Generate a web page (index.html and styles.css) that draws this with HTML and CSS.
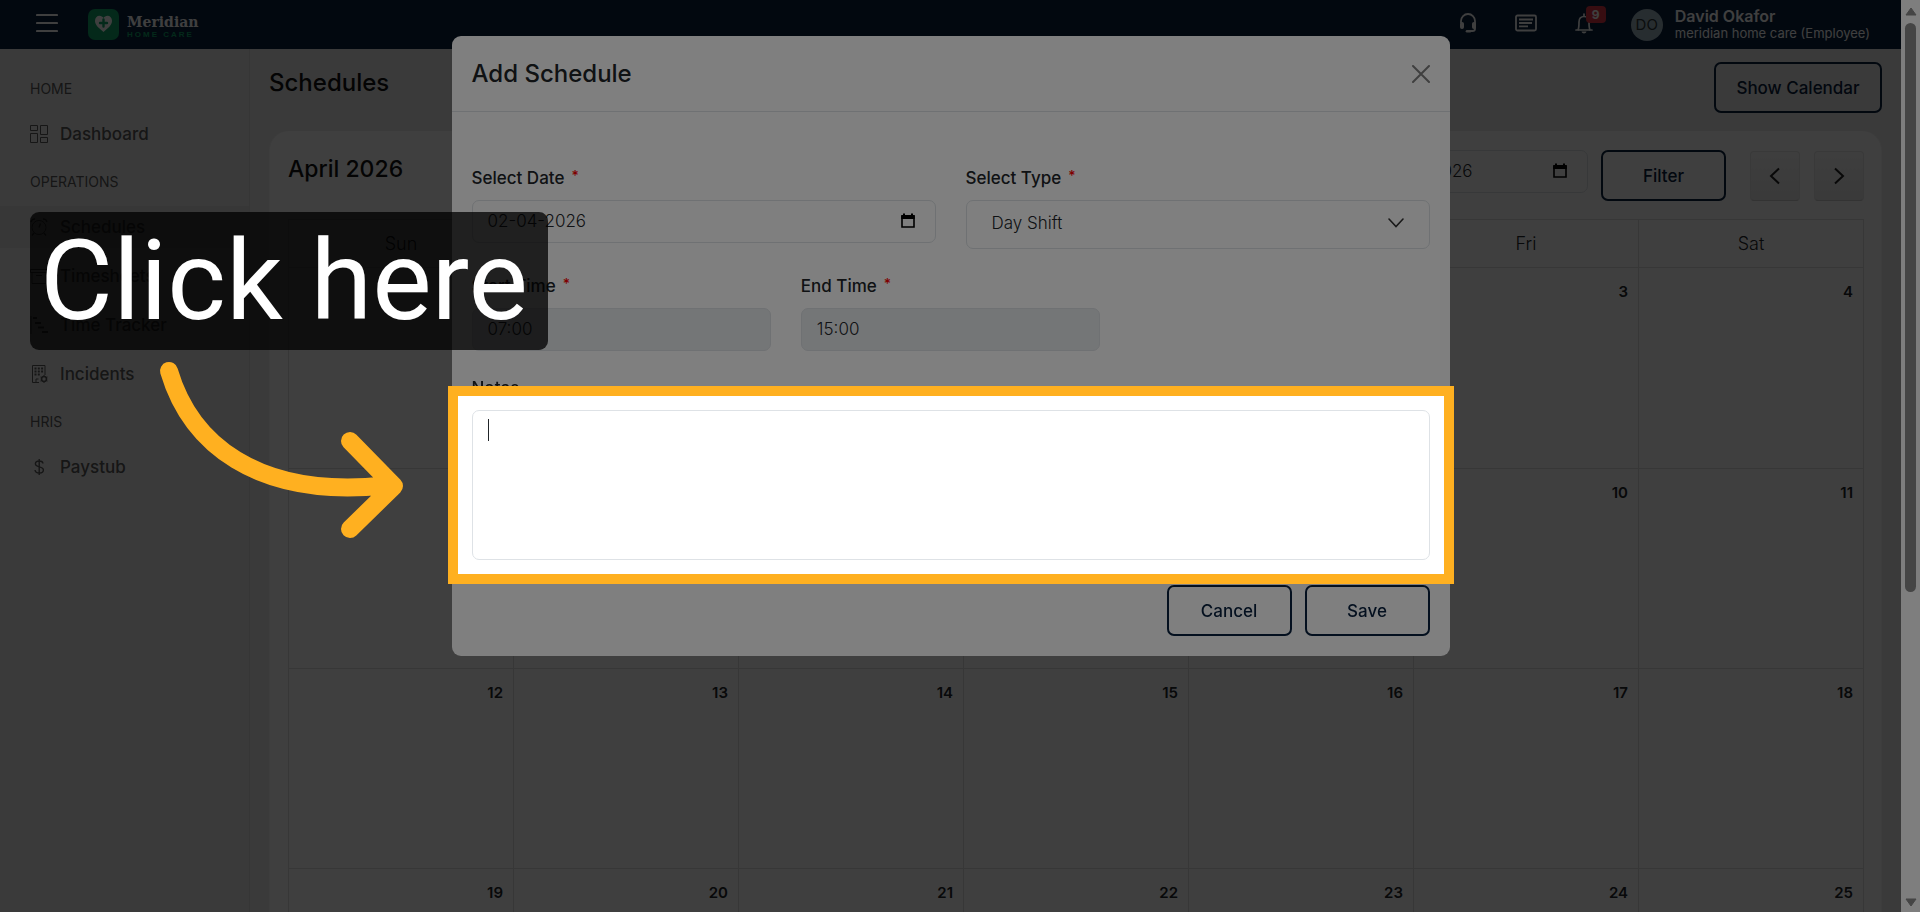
FILE: index.html
```html
<!DOCTYPE html>
<html lang="en">
<head>
<meta charset="utf-8">
<meta name="viewport" content="width=device-width, initial-scale=1">
<title>Schedules - Meridian Home Care</title>
<link rel="stylesheet" href="styles.css">
</head>
<body>
<div class="app">
  <header class="topbar">
    <button class="icon-btn menu-btn" aria-label="Menu">
      <svg width="22" height="20" viewBox="0 0 22 20"><path d="M1 2h20M1 10h20M1 18h20" stroke="#fff" stroke-width="2.200" stroke-linecap="round"/></svg>
    </button>
    <a class="brand" href="#">
      <svg width="31" height="31" viewBox="0 0 31 31"><rect width="31" height="31" rx="7" fill="#10a768"/><path d="M15.500 23C10 18.500 7 15.700 7 11.800c0-3 2-5 4.500-5 1.700 0 3.100.9 4 2.300.9-1.400 2.300-2.300 4-2.300 2.500 0 4.500 2 4.500 5 0 3.900-3 6.700-8.500 11.200z" fill="#fff"/><path d="M15.500 10.500v7M12 14h7" stroke="#10a768" stroke-width="2.400" stroke-linecap="round"/></svg>
      <span class="brand-text"><span class="brand-name">Meridian</span><span class="brand-sub">HOME CARE</span></span>
    </a>
    <nav class="top-actions" aria-label="Quick links">
      <button class="icon-btn" aria-label="Support">
        <svg width="18" height="20" viewBox="0 0 18 20" fill="none" stroke="#fff"><path d="M2 10V8a7 7 0 0 1 14 0v8c0 1.500-1 2-2.500 2H11" stroke-width="1.800"/><rect x="1.500" y="9.500" width="3" height="6" rx="1" fill="#fff"/><rect x="13.500" y="9.500" width="3" height="6" rx="1" fill="#fff"/><path d="M8 18.300h3" stroke-width="2.600" stroke-linecap="round"/></svg>
      </button>
      <button class="icon-btn" aria-label="News">
        <svg width="22" height="18" viewBox="0 0 22 18" fill="none" stroke="#fff"><rect x="1" y="1.500" width="20" height="15" rx="1.500" stroke-width="1.800"/><path d="M4 5.500h14M4 9h13M4 12.300h9" stroke-width="1.800"/></svg>
      </button>
      <button class="icon-btn bell" aria-label="Notifications">
        <svg width="18" height="21" viewBox="0 0 18 21" fill="none" stroke="#fff"><path d="M1 17h16M3 17c1-2 1-4 1-8 0-3.500 2-5.500 5-5.500s5 2 5 5.500c0 4 0 6 1 8M9 3.500V1" stroke-width="1.700" stroke-linecap="round"/><path d="M6.500 18.500h5c-.5 2.500-4.500 2.500-5 0z" fill="#fff" stroke="none"/></svg>
        <span class="badge">9</span>
      </button>
      <button class="user">
        <span class="avatar">DO</span>
        <span class="user-text"><span class="user-name">David Okafor</span><span class="user-role">meridian home care (Employee)</span></span>
      </button>
    </nav>
  </header>
  <div class="shell">
    <nav class="sidebar" aria-label="Main">
      <h2 class="side-head">Home</h2>
      <div class="side-group">
        <a class="side-link" href="#"><svg width="18" height="18" viewBox="0 0 18 18" fill="none" stroke="currentColor"><path d="M.5.5h7v5h-7zM10.500.5h7v9h-7zM.5 8.500h7v9h-7zM10.500 12.500h7v5h-7z"/></svg>Dashboard</a>
      </div>
      <h2 class="side-head">Operations</h2>
      <div class="side-group">
        <a class="side-link active" href="#"><svg width="18" height="18" viewBox="0 0 18 18" fill="none" stroke="currentColor"><circle cx="9" cy="9.500" r="7"/><path d="M9 9.500l1.500-4M1 4a4 4 0 0 1 4-3M17 4a4 4 0 0 0-4-3M4 15l-2 2.500M14 15l2 2.500" stroke-width="1.400"/></svg>Schedules</a>
        <a class="side-link" href="#"><svg width="18" height="18" viewBox="0 0 18 18" fill="none" stroke="currentColor"><path d="M.5 2.500h17v3H.5zM2 5.500v11h14v-11M6 8.500h6"/></svg>Timesheets</a>
        <a class="side-link" href="#"><svg width="18" height="18" viewBox="0 0 18 18" fill="none" stroke="currentColor"><path d="M1 0v18"/><path d="M3 2h4M5 7h6M8 11.500h6M12 16h6" stroke-width="2"/></svg>Time Tracker</a>
        <a class="side-link" href="#"><svg width="18" height="18" viewBox="0 0 18 18" fill="none" stroke="currentColor"><path d="M9 17.500H2.500V.5h12.500V10M6 17.500V14h2.500"/><path d="M4.500 3.500h9M4.500 6.500h9M4.500 9.500h6" stroke-width="2" stroke-dasharray="2 1.300"/><circle cx="14" cy="14" r="2.500" stroke-width="1.600"/><path d="M14 10v1.500M14 16.500V18M10.500 12l1.300.8M16.200 15.200l1.300.8M10.500 16l1.300-.8M16.200 12.800l1.300-.8"/></svg>Incidents</a>
      </div>
      <h2 class="side-head">HRIS</h2>
      <div class="side-group">
        <a class="side-link" href="#"><svg width="18" height="18" viewBox="0 0 18 18" fill="none" stroke="currentColor" stroke-width="1.400"><path d="M13 5.500C12.800 3.800 11.400 3 9.200 3 7 3 5.400 4 5.400 5.800c0 4.200 8 1.800 8 6.200 0 2-1.700 3-4 3-2.500 0-4.200-1-4.400-3M9.200 1v16"/></svg>Paystub</a>
      </div>
    </nav>
    <main class="main">
      <div class="page-head">
        <h1 class="page-title">Schedules</h1>
        <button class="btn btn-wide">Show Calendar</button>
      </div>
      <section class="card">
        <div class="card-head">
          <h2 class="month">April 2026</h2>
          <div class="filters">
            <div class="date-box filter-date">
              <input class="date-input" type="text" aria-label="Filter date" value="02-04-2026">
              <svg class="cal-icon" width="14" height="16" viewBox="0 0 14 16"><path d="M1 3.500h12v10.500H1z" fill="none" stroke="#000" stroke-width="1.600"/><path d="M.2 2h13.600v4H.2zM2 .5h2V3H2zM10 .5h2V3h-2z"/></svg>
            </div>
            <button class="btn">Filter</button>
            <div class="pager">
              <button class="page-btn" aria-label="Previous month"><svg width="12" height="18" viewBox="0 0 12 18"><path d="M10 1.500L2 9l8 7.500" fill="none" stroke="#222" stroke-width="2"/></svg></button>
              <button class="page-btn" aria-label="Next month"><svg width="12" height="18" viewBox="0 0 12 18"><path d="M2 1.500L10 9l-8 7.500" fill="none" stroke="#222" stroke-width="2"/></svg></button>
            </div>
          </div>
        </div>
        <table class="calendar">
          <thead><tr><th>Sun</th><th>Mon</th><th>Tue</th><th>Wed</th><th>Thu</th><th>Fri</th><th>Sat</th></tr></thead>
          <tbody>
            <tr><td></td><td></td><td></td><td>1</td><td>2</td><td>3</td><td>4</td></tr>
            <tr><td>5</td><td>6</td><td>7</td><td>8</td><td>9</td><td>10</td><td>11</td></tr>
            <tr><td>12</td><td>13</td><td>14</td><td>15</td><td>16</td><td>17</td><td>18</td></tr>
            <tr><td>19</td><td>20</td><td>21</td><td>22</td><td>23</td><td>24</td><td>25</td></tr>
          </tbody>
        </table>
      </section>
    </main>
  </div>
</div>

<div class="modal-layer">
  <div class="backdrop">
    <form class="modal" role="dialog" aria-labelledby="modal-title">
      <div class="modal-head">
        <h2 class="modal-title" id="modal-title">Add Schedule</h2>
        <button class="icon-btn" type="button" aria-label="Close"><svg width="18" height="18" viewBox="0 0 18 18"><path d="M1 1l16 16M17 1L1 17" stroke="#7f7f7f" stroke-width="2" stroke-linecap="round"/></svg></button>
      </div>
      <div class="modal-body">
        <div class="row two">
          <div class="field">
            <label class="label" for="date">Select Date <span class="req">*</span></label>
            <div class="date-box">
              <input class="date-input" id="date" type="text" value="02-04-2026">
              <svg class="cal-icon" width="14" height="16" viewBox="0 0 14 16"><path d="M1 3.500h12v10.500H1z" fill="none" stroke="#000" stroke-width="1.600"/><path d="M.2 2h13.600v4H.2zM2 .5h2V3H2zM10 .5h2V3h-2z"/></svg>
            </div>
          </div>
          <div class="field">
            <label class="label" for="type">Select Type <span class="req">*</span></label>
            <div class="select-box">
              <select class="select" id="type"><option>Day Shift</option></select>
              <svg class="chevron" width="16" height="10" viewBox="0 0 16 10"><path d="M1 1l7 7.500L15 1" fill="none" stroke="#333" stroke-width="1.600" stroke-linecap="round"/></svg>
            </div>
          </div>
        </div>
        <div class="row three">
          <div class="field">
            <label class="label" for="start">Start Time <span class="req">*</span></label>
            <input class="time-input" id="start" type="text" value="07:00" disabled>
          </div>
          <div class="field">
            <label class="label" for="end">End Time <span class="req">*</span></label>
            <input class="time-input" id="end" type="text" value="15:00" disabled>
          </div>
        </div>
        <div class="field">
          <label class="label" for="notes">Notes</label>
          <div class="notes-box">
            <textarea class="notes" id="notes"></textarea>
            <span class="caret"></span>
            <span class="spotlight"></span>
          </div>
        </div>
        <div class="actions">
          <button class="btn" type="button">Cancel</button>
          <button class="btn" type="button">Save</button>
        </div>
      </div>
    </form>
  </div>
  <div class="scrollbar" aria-hidden="true">
    <svg width="12" height="9" viewBox="0 0 12 9"><path d="M6 1l5 7H1z" fill="#8a8a8a" stroke="#8a8a8a" stroke-linejoin="round"/></svg>
    <div class="track"><div class="thumb"></div></div>
    <svg width="12" height="9" viewBox="0 0 12 9"><path d="M6 8L1 1h10z" fill="#8a8a8a" stroke="#8a8a8a" stroke-linejoin="round"/></svg>
  </div>
</div>

<div class="callout">Click here</div>
<svg class="arrow" width="260" height="190" viewBox="150 355 260 190" fill="none" stroke="#ffb020" stroke-width="18" stroke-linecap="round" stroke-linejoin="round"><path d="M169 371C190 442 255 499 385 485.500M350 441l44 45-44 43"/></svg>
</body>
</html>
```
FILE: styles.css
```css
* { box-sizing: border-box; }
body {
  margin: 0;
  height: 100vh;
  overflow: hidden;
  font-family: Inter, "Liberation Sans", sans-serif;
  font-size: 16px;
  color: #212529;
  background: #ebebeb;
}
h1, h2 { margin: 0; font-weight: 500; }
button, input, select, textarea { font: inherit; color: inherit; }
a { color: inherit; text-decoration: none; }
svg { display: block; flex: none; }

.app { height: 100vh; margin-right: 19px; display: flex; flex-direction: column; overflow: hidden; }
.icon-btn { padding: 0; border: 0; background: none; }

.topbar { height: 49px; flex: none; display: flex; align-items: center; padding: 0 31px 0 36px; background: #08203e; color: #fff; }
.menu-btn { margin-right: 30px; padding-bottom: 4px; }
.brand { display: flex; align-items: center; gap: 8px; }
.brand-text { display: flex; flex-direction: column; padding-top: 4px; }
.brand-name { font: bold 14px/16px "DejaVu Serif", serif; }
.brand-sub { font: bold 8px/9px "Liberation Sans", sans-serif; letter-spacing: 2px; color: #10a768; }
.top-actions { margin-left: auto; display: flex; align-items: center; gap: 38px; }
.top-actions .icon-btn { padding-bottom: 3px; }
.bell { position: relative; }
.badge { position: absolute; left: 11px; top: -7px; width: 20px; height: 17px; border-radius: 4px; background: #dc3545; font-size: 12px; font-weight: 700; line-height: 17px; text-align: center; color: #fff; }
.user { display: flex; align-items: center; gap: 12px; padding: 0; border: 0; background: none; text-align: left; }
.avatar { width: 32px; height: 32px; border-radius: 50%; background: #9fb4c0; color: #2c3438; font-size: 15px; line-height: 32px; text-align: center; }
.user-text { display: flex; flex-direction: column; }
.user-name { font-size: 16px; font-weight: 600; line-height: 17px; }
.user-role { font-size: 13px; line-height: 16px; }

.shell { flex: 1; display: flex; min-height: 0; }
.sidebar { width: 250px; flex: none; padding-top: 15px; border-right: 1px solid #d9d9d9; color: #585858; }
.side-head { padding-left: 30px; font-size: 14px; font-weight: 400; line-height: 49px; text-transform: uppercase; }
.side-group { display: flex; flex-direction: column; gap: 7px; margin-bottom: 2px; }
.side-link { display: flex; align-items: center; gap: 12px; height: 42px; padding-left: 30px; font-size: 17px; font-weight: 500; }
.active { background: #dcdcdc; }

.main { flex: 1; padding: 13px 19px 0; display: flex; flex-direction: column; gap: 18px; min-width: 0; }
.page-head { display: flex; justify-content: space-between; align-items: flex-start; }
.page-title, .modal-title { font-size: 24px; line-height: 42px; }
.page-title, .month { color: #111; }
.btn { min-width: 125px; height: 51px; padding: 0 20px; border: 2px solid #08203e; border-radius: 7px; background: none; color: #08203e; font-size: 17px; font-weight: 500; }
.btn-wide { min-width: 168px; }

.card { background: #fff; border-radius: 20px; padding: 19px 17px 0 18px; border: 1px solid #f4f4f4; border-width: 0 1px; height: 1000px; flex: none; }
.card-head { display: flex; justify-content: space-between; align-items: flex-start; }
.month { font-size: 23px; line-height: 38px; }
.filters { display: flex; align-items: flex-start; gap: 13px; }
.filter-date { width: 230px; }
.pager { display: flex; gap: 14px; margin: 1px 0 0 11px; }
.page-btn { display: flex; align-items: center; justify-content: center; width: 50px; height: 50px; padding: 0; border: 1px solid #e4e4e4; border-bottom-color: #ccc; border-radius: 4px; background: linear-gradient(#fafafa, #e8e8e8); }
.calendar { width: 100%; margin-top: 18px; border-collapse: collapse; table-layout: fixed; }
.calendar th, .calendar td { border: 1px solid #dedede; }
.calendar th { height: 48px; padding: 0; font-size: 18px; font-weight: 300; }
.calendar td { height: 200px; padding: 12px 10px; vertical-align: top; text-align: right; font-size: 15px; font-weight: 600; line-height: 24px; }
.calendar tbody tr:first-child td { height: 201px; }

.modal-layer { position: fixed; inset: 0; display: flex; }
.backdrop { flex: 1; display: flex; justify-content: center; align-items: flex-start; padding: 36px 0; background: rgba(0, 0, 0, .5); }
.modal { width: 998px; max-width: 90%; background: #fff; border-radius: 9px; }
.modal-head { display: flex; justify-content: space-between; align-items: center; height: 76px; padding: 0 20px; border-bottom: 1px solid #dee2e6; }
.modal-body { padding: 54px 20px 20px; display: flex; flex-direction: column; gap: 25px; }
.row { display: grid; gap: 30px; align-items: start; }
.two { grid-template-columns: 1fr 1fr; }
.three { grid-template-columns: 1fr 1fr 1fr; }
.field { display: flex; flex-direction: column; gap: 10px; }
.label { display: flex; gap: 7px; height: 24px; font-size: 17px; font-weight: 500; line-height: 24px; }
.req { color: #f00; font-size: 14px; line-height: 20px; }
.date-box { display: flex; align-items: center; height: 43px; padding: 0 20px 2px 15px; border: 1px solid #dee2e6; border-radius: 7px; }
.date-input { flex: 1; min-width: 0; border: 0; padding: 0; background: none; font-size: 17px; font-weight: 300; outline: 0; }
.select-box { display: grid; align-items: center; }
.select { grid-area: 1 / 1; height: 49px; padding: 0 25px 3px; border: 1px solid #dee2e6; border-radius: 7px; background: #fff; appearance: none; font-size: 17px; font-weight: 300; }
.chevron { grid-area: 1 / 1; justify-self: end; margin: 0 26px 3px 0; pointer-events: none; }
.time-input { width: 100%; height: 43px; padding: 0 15px 2px; border: 1px solid #dee2e6; border-radius: 7px; background: #e9ecef; color: #212529; font-size: 17px; font-weight: 300; }
.notes-box { position: relative; display: flex; }
.notes { flex: 1; height: 150px; padding: 8px 15px; border: 1px solid #dee2e6; border-radius: 7px; background: #fff; resize: none; outline: 0; }
.caret { position: absolute; left: 16px; top: 9px; width: 1px; height: 22px; background: #212529; }
.spotlight { position: absolute; inset: -24px; z-index: 2; border: 10px solid #ffb020; box-shadow: 0 0 0 3000px rgba(0, 0, 0, .5); pointer-events: none; }
.actions { display: flex; justify-content: flex-end; gap: 13px; }

.scrollbar { width: 19px; flex: none; display: flex; flex-direction: column; align-items: center; padding: 7px 0 5px; background: #fcfcfc; }
.track { flex: 1; width: 11px; padding-top: 7px; }
.thumb { height: 65%; border-radius: 6px; background: #8a8a8a; }

.callout { position: absolute; z-index: 3; left: 30px; top: 212px; padding: 0 20px 0 10px; border-radius: 9px; background: rgba(0, 0, 0, .75); color: #fff; font-family: Roboto, sans-serif; font-size: 112px; line-height: 138px; white-space: nowrap; }
.arrow { position: absolute; z-index: 3; left: 150px; top: 355px; }
```
